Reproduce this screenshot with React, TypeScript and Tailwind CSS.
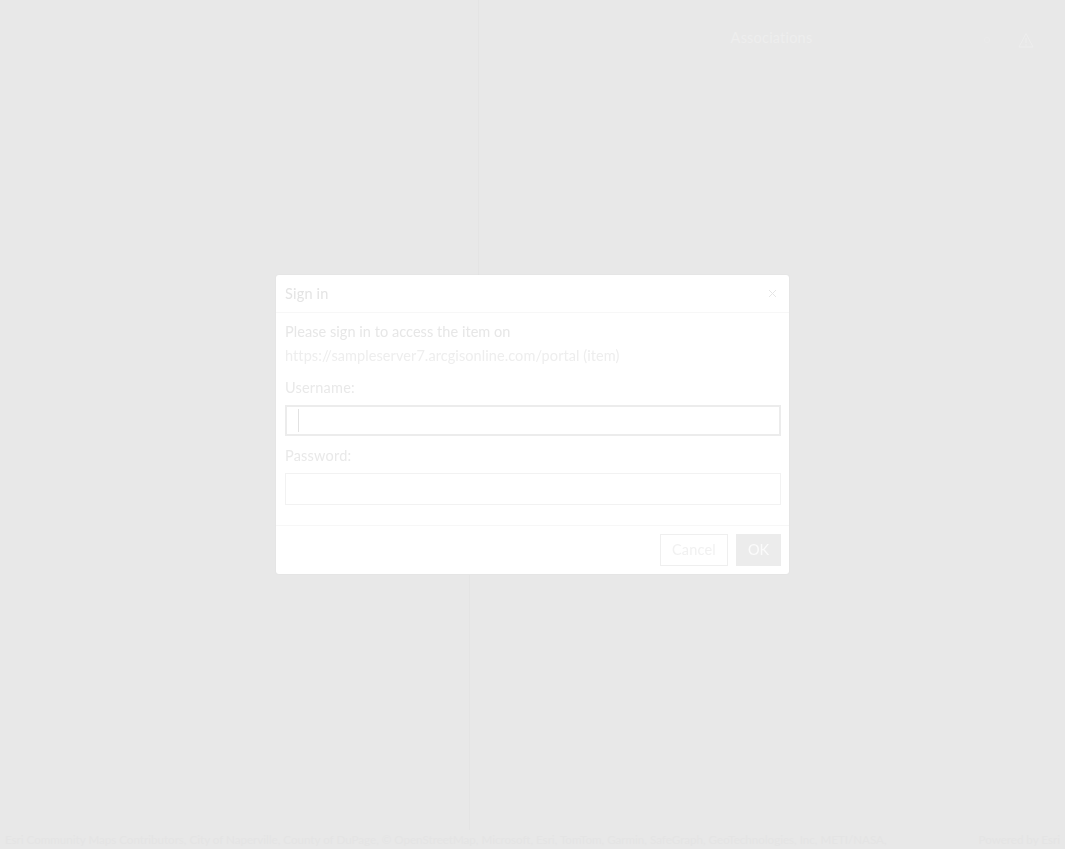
import React from "react";

export default function App() {
  const font = { fontFamily: "Lato, 'Noto Sans', Arial, sans-serif" };
  return (
    <div
      className="relative h-screen w-full overflow-hidden bg-[#e8e8e8] flex flex-col"
      style={font}
    >
      {/* map drawing */}
      <svg className="absolute inset-0 pointer-events-none" width="1065" height="849">
        <line x1="478.5" y1="0" x2="478.5" y2="275" stroke="#e4e4e4" strokeWidth="1" />
        <line x1="469.5" y1="575" x2="469.5" y2="830" stroke="#e4e4e4" strokeWidth="1" />
      </svg>

      {/* top area */}
      <div className="relative flex">
        <div className="w-[478px] shrink-0" />
        <div className="flex-1 grid grid-cols-[1fr_auto_1fr] items-center h-[76px]">
          <div />
          <div className="text-[14.5px] tracking-[0.2px] text-[#eeeeee] leading-none">Associations</div>
          <div className="flex items-center justify-end gap-[28px] pr-[31px] pt-[4px]">
            <span className="w-[6px] h-[6px] rounded-full border border-[#ebebeb]" />
            <svg width="16" height="16" viewBox="0 0 16 16" fill="none">
              <path d="M8 1.5 L15 15 H1 Z" stroke="#eeeeee" strokeWidth="1" strokeLinejoin="round" />
              <line x1="8" y1="6" x2="8" y2="11" stroke="#eeeeee" strokeWidth="1" />
              <circle cx="8" cy="13" r="0.7" fill="#eeeeee" />
            </svg>
          </div>
        </div>
      </div>

      <div className="flex-1" />

      {/* attribution */}
      <div className="relative flex items-center justify-between h-[17px] px-[5px] text-[11.6px] text-[#e4e4e4] whitespace-nowrap mb-[1px]">
        <span>
          Esri Community Maps Contributors, City of Naperville, County of DuPage, © OpenStreetMap, Microsoft, Esri, TomTom, Garmin, SafeGraph, GeoTechnologies, Inc, METI/NASA,
        </span>
        <span>Powered by Esri</span>
      </div>

      {/* dialog */}
      <div className="fixed inset-0 flex items-center justify-center">
        <div className="w-[513px] h-[299px] bg-white rounded-[3px] shadow-[0_0_2px_rgba(0,0,0,0.05)] flex flex-col">
          <div className="h-[38px] flex items-center justify-between pl-[9px] pr-[12px] border-b border-[#f7f7f7]">
            <span className="text-[14.5px] tracking-[0.2px] text-[#e4e4e4]">Sign in</span>
            <svg width="9" height="9" viewBox="0 0 9 9">
              <path d="M1 1 L8 8 M8 1 L1 8" stroke="#e6e6e6" strokeWidth="1" />
            </svg>
          </div>
          <div className="flex-1 px-[8px] pl-[9px] pt-[7px]">
            <div className="text-[14.5px] tracking-[0.05px] leading-[24px] text-[#e7e7e7]">Please sign in to access the item on</div>
            <div className="text-[14.5px] tracking-[0.08px] leading-[24px] text-[#eeeeee]">https://sampleserver7.arcgisonline.com/portal (item)</div>
            <div className="mt-[8px] text-[14.5px] tracking-[0.2px] leading-[24px] text-[#e9e9e9]">Username:</div>
            <div className="mt-[5px] h-[31px] border-2 border-[#ececec] flex items-center pl-[11px]">
              <span className="w-px h-[23px] bg-[#e2e2e2]" />
            </div>
            <div className="mt-[8px] text-[14.5px] tracking-[0.2px] leading-[24px] text-[#e9e9e9]">Password:</div>
            <div className="mt-[5px] h-[32px] border border-[#f2f2f2]" />
          </div>
          <div className="h-[49px] border-t border-[#f7f7f7] flex items-center justify-end gap-[8px] pr-[8px]">
            <button className="h-[32px] px-[11px] border border-[#efefef] text-[14.5px] tracking-[0.2px] text-[#f1f1f1] bg-white">
              Cancel
            </button>
            <button className="h-[32px] w-[45px] bg-[#ececec] text-[14.5px] text-[#fbfbfb]">OK</button>
          </div>
        </div>
      </div>
    </div>
  );
}
